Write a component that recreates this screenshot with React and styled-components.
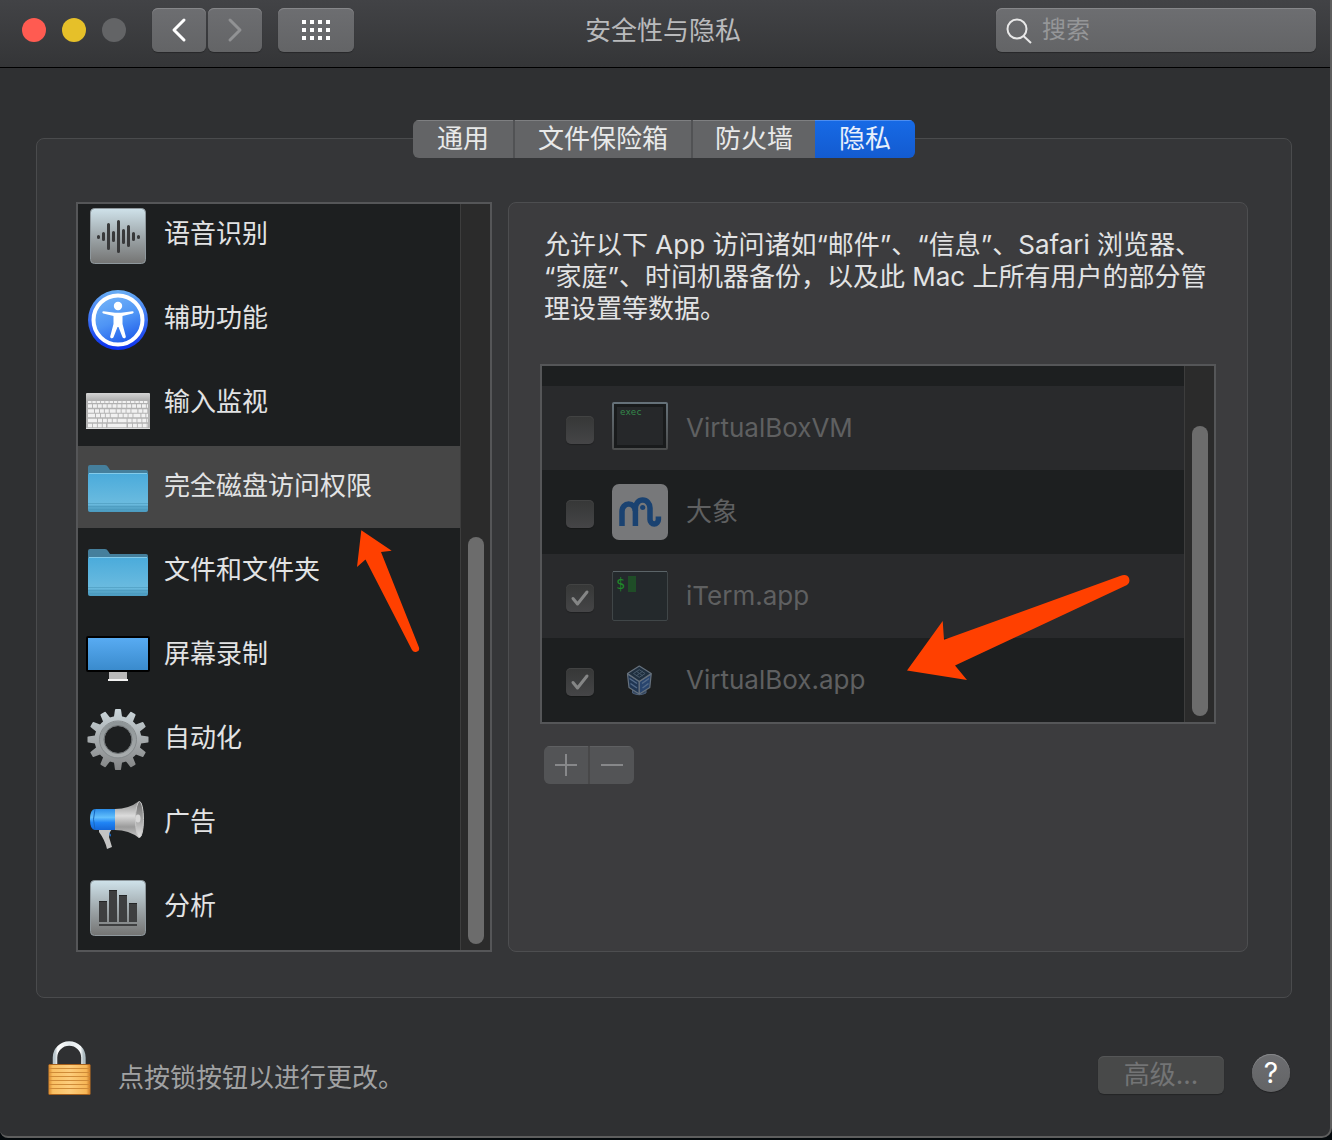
import React from "react";
import styled, { createGlobalStyle, css } from "styled-components";

const GlobalStyle = createGlobalStyle`
  *, *::before, *::after { box-sizing: border-box; }
  body {
    margin: 0;
    background: #04090c;
    color: #e2e3e4;
    font: 26px/36px Inter, "Noto Sans CJK SC", sans-serif;
  }
  button, input { font: inherit; color: inherit; margin: 0; }
  button { border: 0; padding: 0; }
  ul { list-style: none; margin: 0; padding: 0; }
  p { margin: 0; }
  svg { display: block; flex: none; }
`;

const controlFace = css`
  background: linear-gradient(#6d6e71, #636466);
  box-shadow: inset 0 1px 0 #86878a, 0 1px 1px rgba(0, 0, 0, 0.3);
`;

const Window = styled.div`
  background: #2f3032;
  border: solid #5e5e5e;
  border-width: 0 2px 2px 0;
  border-radius: 0 0 10px 8px;
`;

const Toolbar = styled.header`
  display: grid;
  grid-template-columns: 1fr auto 1fr;
  align-items: center;
  padding: 8px 14px 15px 22px;
  background: linear-gradient(#424346, #343537);
  border-bottom: 1px solid #000;
`;

const ToolbarLeft = styled.div`
  display: flex;
  align-items: center;
  gap: 16px;
`;

const Lights = styled.div`
  display: flex;
  gap: 16px;
  margin-right: 10px;
`;

const Light = styled.button`
  width: 24px;
  height: 24px;
  border-radius: 50%;
  background: ${(p) => p.$color};
`;

const NavPair = styled.div`
  display: flex;
  gap: 2px;
`;

const ToolButton = styled.button`
  ${controlFace}
  display: grid;
  place-items: center;
  width: ${(p) => (p.$wide ? 76 : 54)}px;
  height: 44px;
  border-radius: 6px;
`;

const Title = styled.h1`
  margin: 0;
  padding: 2px 12px 0 0;
  font-size: 26px;
  font-weight: 400;
  color: #b9babc;
`;

const Search = styled.label`
  ${controlFace}
  justify-self: end;
  display: flex;
  align-items: center;
  gap: 8px;
  width: 320px;
  height: 44px;
  padding: 0 10px;
  border-radius: 6px;

  input {
    flex: 1;
    min-width: 0;
    padding: 0;
    border: 0;
    outline: 0;
    background: none;
    font-size: 24px;
    line-height: 36px;
  }
  input::placeholder { color: #959698; opacity: 1; }
`;

const Main = styled.main`
  padding: 52px 38px 0 36px;
`;

const Tabs = styled.div`
  position: relative;
  z-index: 1;
  display: grid;
  grid-template-columns: 102px 178px 122px 100px;
  width: max-content;
  margin: 0 auto -20px;
  border-radius: 6px;
  overflow: hidden;
`;

const Tab = styled.button`
  height: 38px;
  line-height: 38px;
  color: ${(p) => (p.$active ? "#e8f0fc" : "#e8e9e9")};
  background: ${(p) => (p.$active ? "linear-gradient(#176ae6, #135bd0)" : "#636466")};
  box-shadow: inset 0 1px 0 ${(p) => (p.$active ? "#4d8df0" : "#7e7f81")};
  border-right: ${(p) => (p.$divider ? "2px solid #515254" : "0")};
`;

const Panel = styled.section`
  display: flex;
  gap: 16px;
  padding: 63px 43px 45px 39px;
  background: #353638;
  border: 1px solid #4a4b4d;
  border-radius: 8px;
`;

const ScrollBox = styled.div`
  position: relative;
  display: flex;
  background: #1d1f20;
  border: 2px solid #555658;
`;

const Sidebar = styled(ScrollBox)`
  flex: none;
  width: 416px;
  height: 750px;
`;

const Track = styled.div`
  display: flex;
  flex-direction: column;
  justify-content: flex-end;
  align-items: center;
  width: 30px;
  padding-bottom: 6px;
  background: #2b2b2b;
  border-left: 1px solid #3d3d3d;
`;

const Thumb = styled.div`
  width: 16px;
  height: ${(p) => p.$share}%;
  border-radius: 8px;
  background: #6c6c6c;
`;

const Categories = styled.ul`
  flex: 1;
  display: flex;
  flex-direction: column;
  justify-content: flex-end;
  overflow: hidden;
`;

const Category = styled.button`
  display: flex;
  align-items: center;
  gap: 14px;
  width: 100%;
  height: 84px;
  padding: 0 8px;
  text-align: left;
  background: ${(p) => (p.$selected ? "#464646" : "transparent")};
  border-bottom: 2px solid #1d1f20;

  svg { margin-top: 2px; }
  span { padding-bottom: 2px; }
`;

const Detail = styled.div`
  flex: 1;
  min-width: 0;
  padding: 26px 31px;
  background: #3c3c3e;
  border: 1px solid #4d4e50;
  border-radius: 8px;
`;

const Description = styled.p`
  padding: 0 4px;
  line-height: 32px;
`;

const AppBox = styled(ScrollBox)`
  margin: 39px 0 22px;
`;

const Apps = styled.ul`
  flex: 1;
  padding-top: 20px;
`;

const AppRow = styled.li`
  background: #1d1f20;
  &:nth-child(odd) { background: #292a2c; }

  label {
    display: flex;
    align-items: center;
    gap: 18px;
    height: 84px;
    padding-left: 24px;
    color: #5f6061;
  }
`;

const Tick = styled.span`
  display: grid;
  place-items: center;
  margin-top: 4px;

  > * { grid-area: 1 / 1; }
  input {
    appearance: none;
    width: 28px;
    height: 28px;
    border-radius: 5px;
    background: linear-gradient(#363737, #454547);
    box-shadow: inset 0 1px 0 #424343, 0 1px 1px rgba(0, 0, 0, 0.25);
  }
`;

const EditButtons = styled.div`
  display: flex;
  gap: 2px;
  width: max-content;
  margin-left: 4px;
  border-radius: 6px;
  overflow: hidden;
  background: #484849;
`;

const EditButton = styled.button`
  display: grid;
  place-items: center;
  width: 44px;
  height: 38px;
  background: #535456;
  box-shadow: inset 0 1px 0 #5f6062;
`;

const Footer = styled.footer`
  display: flex;
  align-items: flex-end;
  gap: 28px;
  padding: 42px 40px 40px 46px;
`;

const LockButton = styled.button`
  background: none;
`;

const LockNote = styled.p`
  flex: 1;
  margin-left: -2px;
  color: #a1a2a3;
`;

const Advanced = styled.button`
  width: 126px;
  height: 38px;
  margin-bottom: 2px;
  border-radius: 6px;
  color: #737475;
  background: #484949;
  box-shadow: inset 0 1px 0 #555657, 0 1px 1px rgba(0, 0, 0, 0.25);
`;

const Help = styled.button`
  ${controlFace}
  width: 38px;
  height: 38px;
  margin-bottom: 4px;
  border-radius: 50%;
  font-size: 28px;
  line-height: 38px;
  color: #fff;
`;

const Pointer = styled.svg`
  position: absolute;
  left: ${(p) => p.$left}px;
  top: ${(p) => p.$top}px;
  pointer-events: none;
`;

const Chevron = ({ d, color }) => (
  <svg width="16" height="26" fill="none" stroke={color} strokeWidth="3" strokeLinecap="round" strokeLinejoin="round">
    <path d={d} />
  </svg>
);

const GridDots = () => (
  <svg width="28" height="20" fill="#fff">
    {[0, 8, 16].map((y) => [0, 8, 16, 24].map((x) => <rect key={x + "-" + y} x={x} y={y} width="4" height="4" />))}
  </svg>
);

const SearchIcon = () => (
  <svg width="28" height="28" fill="none" stroke="#e8e8e8" strokeWidth="2">
    <circle cx="11" cy="13" r="9.5" />
    <path d="M17.500 20l7.500 7" />
  </svg>
);

const Tile = ({ id, children }) => (
  <svg width="64" height="64">
    <defs>
      <linearGradient id={id} x1="0" y1="0" x2="0" y2="1">
        <stop offset="0" stopColor="#cfe2ea" />
        <stop offset="0.55" stopColor="#9ba3a6" />
        <stop offset="1" stopColor="#747473" />
      </linearGradient>
    </defs>
    <rect x="4.500" y="4.500" width="55" height="55" rx="4" fill={`url(#${id})`} stroke="#8f989d" />
    {children}
  </svg>
);

const SpeechIcon = () => (
  <Tile id="speechFace">
    <path
      d="M12.500 32.500v1M17.500 29.500v6M22.500 20.500v24M27.500 28.500v8M32.500 17.500v30M37.500 26.500v12M42.500 22.500v19M47.500 29.500v6M52.500 32.500v1"
      stroke="#38393a"
      strokeWidth="3"
      strokeLinecap="round"
    />
  </Tile>
);

const AnalyticsIcon = () => (
  <Tile id="analyticsFace">
    <path d="M13 25h8v21h-8zM23 14h8v32h-8zM33 19h8v27h-8zM43 27h8v19h-8zM13 48h38v2H13z" fill="#3e3f40" />
    <path d="M13 25.500h8M23 14.500h8M33 19.500h8M43 27.500h8" stroke="#242526" />
  </Tile>
);

const AccessIcon = () => (
  <svg width="64" height="64">
    <defs>
      <linearGradient id="accessRim" x1="0" y1="0" x2="0" y2="1">
        <stop offset="0" stopColor="#69aff5" />
        <stop offset="1" stopColor="#0a2ff0" />
      </linearGradient>
      <linearGradient id="accessFace" x1="0.300" y1="0" x2="0.700" y2="1">
        <stop offset="0" stopColor="#72b2f8" />
        <stop offset="0.500" stopColor="#4e94f5" />
        <stop offset="1" stopColor="#1c59ea" />
      </linearGradient>
    </defs>
    <circle cx="32" cy="32" r="30" fill="url(#accessRim)" />
    <circle cx="32" cy="32" r="24.500" fill="url(#accessFace)" stroke="#fff" strokeWidth="4" />
    <circle cx="32" cy="18" r="4.200" fill="#fff" />
    <path
      d="M17.500 23.200 29 24.700h6l11.500-1.500c1.500 0 1.500 2 .2 2.300L36.500 28v8l3.300 12.500c.3 2-2.600 2.500-3.300.8L32.500 39h-1l-4 10.300c-.7 1.700-3.600 1.200-3.300-.8L27.500 36v-8l-10.200-2.500c-1.300-.3-1.300-2.300.2-2.300z"
      fill="#fff"
    />
  </svg>
);

const KeyboardIcon = () => (
  <svg width="64" height="64">
    <defs>
      <linearGradient id="kbBody" x1="0" y1="0" x2="0" y2="1">
        <stop offset="0" stopColor="#d4d4d4" />
        <stop offset="0.200" stopColor="#b0b0b0" />
        <stop offset="1" stopColor="#b4b4b4" />
      </linearGradient>
    </defs>
    <rect x="0" y="21" width="64" height="36" rx="1" fill="url(#kbBody)" />
    <path d="M0 56.500h64" stroke="#dedede" />
    <g stroke="#f1f1f1" fill="none">
      <path d="M2 30h60" strokeWidth="2" strokeDasharray="3.500 0.800" />
      <path d="M2 34h60" strokeWidth="3.500" strokeDasharray="4 0.900" />
      <path d="M2 39h60" strokeWidth="3.500" strokeDasharray="6 1 4 0.900 4 0.900 4 0.900" />
      <path d="M2 43.500h60" strokeWidth="3.500" strokeDasharray="7 1 4 0.900 4 0.900 4 0.900" />
      <path d="M2 48.500h60" strokeWidth="3.500" strokeDasharray="9 1 4 0.900 4 0.900 4 0.900 4 0.900" />
      <path d="M2 53.500h18M42 53.500h20" strokeWidth="3.500" strokeDasharray="4 0.900" />
      <path d="M21.500 53.500h19" strokeWidth="3.500" />
    </g>
  </svg>
);

const FolderIcon = () => (
  <svg width="64" height="64">
    <defs>
      <linearGradient id="folderFront" x1="0" y1="0" x2="0" y2="1">
        <stop offset="0" stopColor="#4aabdb" />
        <stop offset="0.800" stopColor="#6bbbdf" />
        <stop offset="0.850" stopColor="#5aa9cd" />
        <stop offset="1" stopColor="#4b9bc0" />
      </linearGradient>
    </defs>
    <path d="M2 11q0-2 2-2h15q2 0 3 2l2 3h36q2 0 2 2v10H2z" fill="#457f9c" />
    <path d="M2 19q0-2 2-2h56q2 0 2 2v35q0 2-2 2H4q-2 0-2-2z" fill="url(#folderFront)" />
    <path d="M3 17.500h58" stroke="#83cbea" />
    <path d="M2 47.500h60M2 50.500h60M2 53.500h60" stroke="#4a98bb" strokeOpacity="0.600" />
  </svg>
);

const DisplayIcon = () => (
  <svg width="64" height="64">
    <defs>
      <linearGradient id="displayScreen" x1="0" y1="0" x2="0" y2="1">
        <stop offset="0" stopColor="#58abf2" />
        <stop offset="1" stopColor="#3a8bcd" />
      </linearGradient>
    </defs>
    <rect x="23" y="47" width="18" height="9" fill="#b9b9b9" />
    <rect x="22" y="55" width="20" height="2" fill="#f2f2f2" />
    <rect x="0" y="12" width="64" height="36" rx="2" fill="#000" />
    <rect x="2" y="14" width="60" height="32" fill="url(#displayScreen)" />
  </svg>
);

const GearIcon = () => (
  <svg width="64" height="64">
    <defs>
      <linearGradient id="gearMetal" gradientUnits="userSpaceOnUse" x1="0" y1="0" x2="0" y2="64">
        <stop offset="0" stopColor="#ccd7dc" />
        <stop offset="0.500" stopColor="#a6abad" />
        <stop offset="1" stopColor="#818283" />
      </linearGradient>
      <linearGradient id="gearRing" gradientUnits="userSpaceOnUse" x1="0" y1="14" x2="0" y2="50">
        <stop offset="0" stopColor="#8d9496" />
        <stop offset="1" stopColor="#a9adae" />
      </linearGradient>
      <mask id="gearTeeth">
        {Array.from({ length: 12 }, (_, i) => (
          <path key={i} d="M27.500 12 L29 1.500 Q29.200 1 30 1 H34 Q34.800 1 35 1.500 L36.500 12z" fill="#fff" transform={`rotate(${i * 30} 32 31.500)`} />
        ))}
        <circle cx="32" cy="31.500" r="23.500" fill="#fff" />
        <circle cx="32" cy="31.500" r="13.500" fill="#000" />
      </mask>
    </defs>
    <rect width="64" height="64" fill="url(#gearMetal)" mask="url(#gearTeeth)" />
    <circle cx="32" cy="31.500" r="16" fill="none" stroke="url(#gearRing)" strokeWidth="4" />
    <circle cx="32" cy="31.500" r="18.500" fill="none" stroke="#858a8c" strokeWidth="1" />
    <circle cx="32" cy="31.500" r="14" fill="none" stroke="#6c7072" strokeWidth="1" />
  </svg>
);

const MegaphoneIcon = () => (
  <svg width="64" height="64">
    <defs>
      <linearGradient id="megaBlue" x1="0" y1="0" x2="0" y2="1">
        <stop offset="0" stopColor="#2b8ce8" />
        <stop offset="0.400" stopColor="#63c0fd" />
        <stop offset="0.650" stopColor="#1f84f5" />
        <stop offset="1" stopColor="#1467d8" />
      </linearGradient>
      <linearGradient id="megaHorn" x1="0" y1="0" x2="0" y2="1">
        <stop offset="0" stopColor="#8b8b8b" />
        <stop offset="0.400" stopColor="#dcdcdc" />
        <stop offset="0.700" stopColor="#9b9b9b" />
        <stop offset="1" stopColor="#c9c9c9" />
      </linearGradient>
      <linearGradient id="megaMouth" x1="0" y1="0" x2="0" y2="1">
        <stop offset="0" stopColor="#6f6f6f" />
        <stop offset="0.500" stopColor="#a5a5a5" />
        <stop offset="1" stopColor="#e2e2e2" />
      </linearGradient>
    </defs>
    <path d="M13 37h13l-2 3-1 5 3 10-5 2q-2-9-8-17z" fill="#c4c4c4" />
    <path d="M23 40l2 3-1 2z" fill="#1b7df0" />
    <path d="M29 17H9q-5 0-5 10.500T9 38h20z" fill="url(#megaBlue)" />
    <path d="M9 17q-3 10 0 21" fill="none" stroke="#1767bd" />
    <path d="M29 17q14 0 24-8v37q-10-8-24-8z" fill="url(#megaHorn)" />
    <ellipse cx="53.500" cy="27.500" rx="4" ry="18" fill="url(#megaMouth)" stroke="#c9c9c9" />
    <ellipse cx="52" cy="26.500" rx="2.500" ry="4" fill="#d8d8d8" />
  </svg>
);

const ExecIcon = () => (
  <svg width="56" height="56">
    <defs>
      <linearGradient id="execFrame" x1="0" y1="0" x2="0" y2="1">
        <stop offset="0" stopColor="#66727a" />
        <stop offset="1" stopColor="#4b4c4c" />
      </linearGradient>
    </defs>
    <rect x="0" y="2" width="56" height="48" rx="2" fill="url(#execFrame)" />
    <rect x="2" y="4" width="52" height="44" fill="#191b1c" />
    <rect x="5" y="7" width="46" height="38" fill="#26282a" />
    <text x="8" y="15" fill="#348a4a" fontFamily="DejaVu Sans Mono, monospace" fontSize="9">exec</text>
  </svg>
);

const ElephantIcon = () => (
  <svg width="56" height="56">
    <rect width="56" height="56" rx="7" fill="#77787a" />
    <g fill="none" stroke="#1a4271" strokeWidth="5.500">
      <path d="M10 42V27.500a6.700 7.500 0 0 1 13.400 0V42" />
      <path d="M23.400 27V24a7.300 8 0 0 1 14.600 0v11.500a4.200 4.500 0 0 0 8.400 0v-3" />
    </g>
    <circle cx="30.700" cy="23.500" r="2.600" fill="#1a4271" />
  </svg>
);

const TermIcon = () => (
  <svg width="56" height="56">
    <rect x="0.500" y="3.500" width="55" height="49" rx="1.500" fill="#24292c" stroke="#404648" />
    <path d="M1 3.500h54" stroke="#5b6468" />
    <text x="4" y="21" fill="#1f8a29" fontFamily="DejaVu Sans Mono, monospace" fontSize="15">$</text>
    <rect x="16" y="8" width="8" height="16" fill="#1f4d27" />
  </svg>
);

const CubeIcon = () => (
  <svg width="56" height="56" strokeLinejoin="round">
    <path d="M20.500 37v4q6.800 3.500 13.500 0v-4z" fill="#33465f" stroke="#4d5e76" />
    <path d="M15.500 22 27.300 29.500V42L17 35.500z" fill="#203653" stroke="#66717d" strokeWidth="1.200" />
    <path d="M39.200 22 27.300 29.500V42L37.800 35.500z" fill="#29456e" stroke="#66717d" strokeWidth="1.200" />
    <path d="M27.300 14 39.200 21.500 27.300 29.500 15.500 21.500z" fill="#1f2f3f" stroke="#66717d" strokeWidth="1.200" />
    <path d="M21.500 21.500l5.800-3.800 5.800 3.800-5.800 3.800zM24 19l7 5M31 19l-7 5" fill="none" stroke="#465869" />
    <path d="M17.500 26.500l7.500 5M18.500 31.500l6.500 4.500M37 26.500l-7 5M36.500 31.500l-6 4.500" stroke="#536a88" strokeWidth="1.500" />
  </svg>
);

const LockIcon = () => (
  <svg width="46" height="56">
    <defs>
      <linearGradient id="lockBody" x1="0" y1="0" x2="1" y2="0">
        <stop offset="0" stopColor="#d9862a" />
        <stop offset="0.100" stopColor="#f9bf62" />
        <stop offset="0.500" stopColor="#fdcd7c" />
        <stop offset="0.900" stopColor="#f7b656" />
        <stop offset="1" stopColor="#c87420" />
      </linearGradient>
      <linearGradient id="lockShackle" x1="0" y1="0" x2="1" y2="0">
        <stop offset="0" stopColor="#b9c6cc" />
        <stop offset="0.100" stopColor="#ffffff" />
        <stop offset="0.500" stopColor="#e4eaed" />
        <stop offset="0.900" stopColor="#f5f8f9" />
        <stop offset="1" stopColor="#aebcc2" />
      </linearGradient>
    </defs>
    <path d="M9 25V17.500a14.200 14 0 0 1 28.400 0v7.500" fill="none" stroke="url(#lockShackle)" strokeWidth="4.500" />
    <rect x="2.500" y="24" width="42" height="31" rx="1.500" fill="url(#lockBody)" />
    <path d="M3 28.500h41M3 32.500h41M3 36.500h41M3 40.500h41M3 44.500h41M3 48.500h41" stroke="#cf8b38" />
    <path d="M3 24.500h41M3 54.500h41" stroke="#a8611c" />
  </svg>
);

const categories = [
  ["语音识别", SpeechIcon],
  ["辅助功能", AccessIcon],
  ["输入监视", KeyboardIcon],
  ["完全磁盘访问权限", FolderIcon],
  ["文件和文件夹", FolderIcon],
  ["屏幕录制", DisplayIcon],
  ["自动化", GearIcon],
  ["广告", MegaphoneIcon],
  ["分析", AnalyticsIcon],
];
const selectedCategory = "完全磁盘访问权限";

const apps = [
  ["VirtualBoxVM", ExecIcon, false],
  ["大象", ElephantIcon, false],
  ["iTerm.app", TermIcon, true],
  ["VirtualBox.app", CubeIcon, true],
];

const tabs = ["通用", "文件保险箱", "防火墙", "隐私"];

export default function App() {
  return (
    <>
      <GlobalStyle />
      <Window>
        <Toolbar>
          <ToolbarLeft>
            <Lights>
              <Light $color="#ff5b51" aria-label="关闭" />
              <Light $color="#e6c029" aria-label="最小化" />
              <Light $color="#636466" aria-label="缩放" disabled />
            </Lights>
            <NavPair>
              <ToolButton aria-label="后退"><Chevron d="M13 3L3 13L13 23" color="#fff" /></ToolButton>
              <ToolButton aria-label="前进" disabled><Chevron d="M3 3L13 13L3 23" color="#919294" /></ToolButton>
            </NavPair>
            <ToolButton $wide aria-label="显示全部"><GridDots /></ToolButton>
          </ToolbarLeft>
          <Title>安全性与隐私</Title>
          <Search>
            <SearchIcon />
            <input type="search" placeholder="搜索" aria-label="搜索" />
          </Search>
        </Toolbar>

        <Main>
          <Tabs role="tablist">
            {tabs.map((name, i) => (
              <Tab key={name} role="tab" aria-selected={i === 3} $active={i === 3} $divider={i < 2}>{name}</Tab>
            ))}
          </Tabs>
          <Panel>
            <Sidebar>
              <Categories>
                {categories.map(([name, Icon]) => (
                  <li key={name}>
                    <Category $selected={name === selectedCategory}>
                      <Icon />
                      <span>{name}</span>
                    </Category>
                  </li>
                ))}
              </Categories>
              <Track><Thumb $share={55} /></Track>
              <Pointer $left={278} $top={325} width="66" height="126" fill="#ff4000">
                <path d="M5.300 1.300 35.700 21.700 25 23 63 118.500Q64 122 60 123Q57.500 123.500 56 121L9.500 30.500 1 38z" />
              </Pointer>
            </Sidebar>

            <Detail>
              <Description>
                允许以下 App 访问诸如“邮件”、“信息”、Safari 浏览器、<wbr />“家庭”、时间机器备份，以及此 Mac 上所有用户的部分管理设置等数据。
              </Description>
              <AppBox>
                <Apps>
                  {apps.map(([name, Icon, on]) => (
                    <AppRow key={name}>
                      <label>
                        <Tick>
                          <input type="checkbox" defaultChecked={on} disabled />
                          {on && (
                            <svg width="20" height="18" fill="none" stroke="#858686" strokeWidth="3" strokeLinecap="round" strokeLinejoin="round">
                              <path d="M3 9.500 7.500 15 17 3" />
                            </svg>
                          )}
                        </Tick>
                        <Icon />
                        {name}
                      </label>
                    </AppRow>
                  ))}
                </Apps>
                <Track><Thumb $share={83} /></Track>
                <Pointer $left={364} $top={206} width="226" height="110" fill="#ff4000">
                  <path d="M1 98.500 36.700 49 38 67.700 214 4Q221 1.500 223 6Q224.500 11 221 13L49 93.500 61 108z" />
                </Pointer>
              </AppBox>
              <EditButtons>
                <EditButton aria-label="添加" disabled>
                  <svg width="22" height="22" fill="#87888a"><path d="M10 0h2v10h10v2H12v10h-2V12H0v-2h10z" /></svg>
                </EditButton>
                <EditButton aria-label="移除" disabled>
                  <svg width="22" height="22" fill="#87888a"><path d="M0 10h22v2H0z" /></svg>
                </EditButton>
              </EditButtons>
            </Detail>
          </Panel>
        </Main>

        <Footer>
          <LockButton aria-label="锁"><LockIcon /></LockButton>
          <LockNote>点按锁按钮以进行更改。</LockNote>
          <Advanced disabled>高级...</Advanced>
          <Help aria-label="帮助">?</Help>
        </Footer>
      </Window>
    </>
  );
}
